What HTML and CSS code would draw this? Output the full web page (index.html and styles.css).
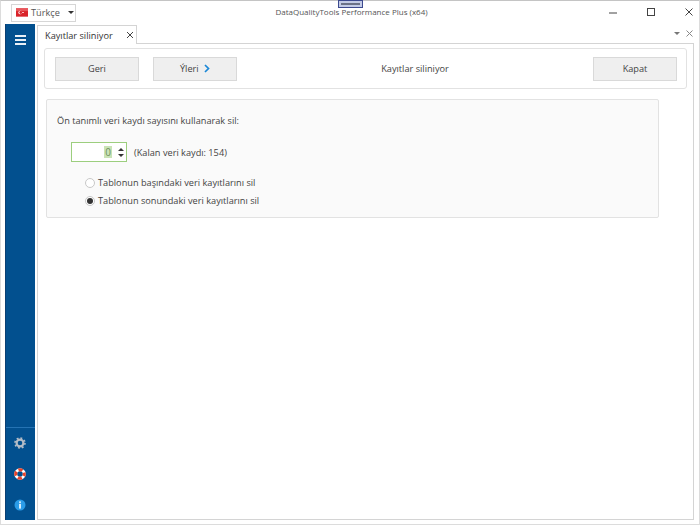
FILE: index.html
```html
<!DOCTYPE html>
<html lang="tr">
  <head>
    <meta charset="UTF-8" />
    <title>DataQualityTools Performance Plus (x64)</title>
    <link rel="stylesheet" href="styles.css">
  </head>
  <body>
    <div class="window">
      <div class="handle"><span></span></div>
      <header class="titlebar">
        <div class="lang">
          <svg class="flag" width="12" height="9" viewBox="0 0 13 9">
            <rect width="13" height="9" fill="#d9232a" />
            <rect width="13" height="3" fill="#e8555a" />
            <circle cx="4.6" cy="4.5" r="2" fill="#fff" />
            <circle cx="5.2" cy="4.5" r="1.6" fill="#d9232a" />
            <rect x="6.8" y="4" width="1.6" height="1" fill="#fff" />
          </svg>
          <span class="lang-name">Türkçe</span>
          <span class="caret"></span>
        </div>
        <div class="title">DataQualityTools Performance Plus (x64)</div>
        <div class="win-btns">
          <svg width="11" height="11" viewBox="0 0 11 11"><path d="M1 6h8" stroke="#444" fill="none" /></svg>
          <svg width="11" height="11" viewBox="0 0 11 11"><rect x="1.5" y="1.5" width="7" height="7" stroke="#444" fill="none" /></svg>
          <svg width="11" height="11" viewBox="0 0 11 11"><path d="M1.5 1.5l7 7M8.5 1.5l-7 7" stroke="#444" fill="none" /></svg>
        </div>
      </header>

      <div class="main">
        <nav class="sidebar">
          <div class="menu-btn"><span></span><span></span><span></span></div>
          <div class="side-tools">
            <svg width="12" height="12" viewBox="0 0 12 12">
              <circle cx="6" cy="6" r="3.4" fill="none" stroke="#b4bcc6" stroke-width="2.2" />
              <circle cx="6" cy="6" r="5" fill="none" stroke="#b4bcc6" stroke-width="1.6" stroke-dasharray="1.9 2" />
            </svg>
            <svg width="12" height="12" viewBox="0 0 12 12">
              <circle cx="6" cy="6" r="4.3" fill="none" stroke="#fff" stroke-width="3" />
              <circle cx="6" cy="6" r="4.3" fill="none" stroke="#e8442a" stroke-width="3" stroke-dasharray="4.2 2.55" stroke-dashoffset="2.1" />
            </svg>
            <svg width="12" height="12" viewBox="0 0 12 12">
              <circle cx="6" cy="6" r="5.5" fill="#2a9be8" />
              <rect x="5.2" y="2.4" width="1.6" height="1.5" fill="#fff" />
              <rect x="5.2" y="4.8" width="1.6" height="4.8" fill="#fff" />
            </svg>
          </div>
        </nav>

        <div class="workspace">
          <div class="tabstrip">
            <div class="tab">
              <span>Kayıtlar siliniyor</span>
              <svg width="8" height="8" viewBox="0 0 8 8"><path d="M1 1l6 6M7 1l-6 6" stroke="#444" fill="none" /></svg>
            </div>
            <div class="strip-btns">
              <span class="caret small"></span>
              <svg width="7" height="7" viewBox="0 0 7 7"><path d="M.5.5l6 6M6.500.5l-6 6" stroke="#888" fill="none" /></svg>
            </div>
          </div>

          <div class="frame">
            <div class="wizard-bar">
              <button class="btn">Geri</button>
              <button class="btn btn-next">
                Ýleri
                <svg width="6" height="9" viewBox="0 0 6 9"><path d="M1 1l3.500 3.500L1 8" stroke="#1b87d6" stroke-width="1.7" fill="none" /></svg>
              </button>
              <div class="step-title">Kayıtlar siliniyor</div>
              <button class="btn">Kapat</button>
            </div>

            <section class="panel">
              <p class="panel-head">Ön tanımlı veri kaydı sayısını kullanarak sil:</p>
              <div class="count-row">
                <div class="spinner">
                  <span class="spin-value">0</span>
                  <span class="spin-arrows"><i class="up"></i><i class="down"></i></span>
                </div>
                <span>(Kalan veri kaydı: 154)</span>
              </div>
              <div class="radios">
                <div class="radio-row"><span class="radio"></span>Tablonun başındaki veri kayıtlarını sil</div>
                <div class="radio-row"><span class="radio checked"></span>Tablonun sonundaki veri kayıtlarını sil</div>
              </div>
            </section>
          </div>
        </div>
      </div>
    </div>
  </body>
</html>
```

FILE: styles.css
```css
html,
body {
  margin: 0;
  height: 100%;
  background-color: #fff;
}
body {
  font-family: "Open Sans", sans-serif;
  font-size: 9.2px;
  color: #444;
  overflow: hidden;
}
.window {
  position: relative;
  width: 700px;
  height: 525px;
  box-sizing: border-box;
  border-top: 1px solid #c4c4c4;
  border-left: 1px solid #dcdcdc;
  border-right: 1px solid #dcdcdc;
  border-bottom: 1px solid #dcdcdc;
  display: flex;
  flex-direction: column;
}
.handle {
  position: absolute;
  top: -1px;
  left: 337px;
  width: 25px;
  height: 8px;
  box-sizing: border-box;
  background-color: #c3cbe6;
  border: 1px solid #3d4a8f;
  display: flex;
  align-items: center;
  justify-content: center;
}
.handle span {
  display: block;
  width: 19px;
  height: 2px;
  background-color: #6a7187;
}

/* title bar */
.titlebar {
  height: 23px;
  display: flex;
  align-items: center;
  position: relative;
  flex: none;
}
.lang {
  margin-left: 10px;
  width: 65px;
  height: 18px;
  box-sizing: border-box;
  border: 1px solid #d6d6d6;
  display: flex;
  align-items: center;
  padding-left: 4px;
}
.flag {
  flex: none;
  margin-right: 3px;
}
.lang-name {
  font-size: 9.2px;
  color: #555;
}
.caret {
  flex: none;
  width: 0;
  height: 0;
  border-left: 3px solid transparent;
  border-right: 3px solid transparent;
  border-top: 3px solid #333;
  margin-left: 8px;
}
.caret.small {
  margin-left: 0;
  border-top-color: #777;
}
.title {
  position: absolute;
  left: 0;
  right: 0;
  top: 5px;
  padding-left: 3px;
  text-align: center;
  font-size: 8px;
  color: #555;
}
.win-btns {
  margin-left: auto;
  margin-right: 4px;
  display: flex;
  gap: 27px;
}

/* sidebar */
.main {
  flex: 1;
  display: flex;
  min-height: 0;
  padding: 0 5px 4px 4px;
}
.sidebar {
  width: 30px;
  flex: none;
  background-color: #02508f;
  display: flex;
  flex-direction: column;
  justify-content: space-between;
  border-left: 1px solid #0a3f73;
  box-sizing: border-box;
}
.menu-btn {
  margin: 11px 0 0 9px;
  display: flex;
  flex-direction: column;
  gap: 2px;
}
.menu-btn span {
  display: block;
  width: 11px;
  height: 2px;
  background-color: #e9f0f7;
}
.side-tools {
  border-top: 1px solid #2573b3;
  padding: 9px 0 9px 8px;
  display: flex;
  flex-direction: column;
  gap: 19px;
}

/* tabs */
.workspace {
  flex: 1;
  margin-left: 2px;
  min-width: 0;
  display: flex;
  flex-direction: column;
}
.tabstrip {
  height: 19px;
  flex: none;
  display: flex;
  align-items: flex-end;
  justify-content: space-between;
}
.tab {
  width: 100px;
  height: 19px;
  box-sizing: border-box;
  border: 1px solid #d4d4d4;
  border-bottom: none;
  background-color: #fff;
  margin-bottom: -1px;
  position: relative;
  display: flex;
  align-items: center;
  justify-content: space-between;
  padding: 0 2px 0 7px;
  color: #333;
}
.strip-btns {
  display: flex;
  align-items: center;
  gap: 6px;
  margin: 0 1px 6px 0;
}
.frame {
  flex: 1;
  border: 1px solid #d4d4d4;
  padding: 4px 6px;
}

/* wizard */
.wizard-bar {
  height: 41px;
  box-sizing: border-box;
  border: 1px solid #e2e2e2;
  border-radius: 3px;
  display: flex;
  align-items: center;
  padding: 0 9px 0 10px;
}
.btn {
  flex: none;
  width: 84px;
  height: 24px;
  box-sizing: border-box;
  border: 1px solid #d9d9d9;
  background-color: #efefef;
  font-family: inherit;
  font-size: 9.2px;
  color: #444;
  padding: 0;
}
.btn-next {
  margin-left: 14px;
}
.btn-next svg {
  margin-left: 3px;
  vertical-align: -1px;
}
.step-title {
  flex: 1;
  text-align: center;
  color: #444;
}

/* panel */
.panel {
  margin: 10px 0 0 2px;
  width: 613px;
  height: 119px;
  box-sizing: border-box;
  background-color: #fafafa;
  border: 1px solid #e2e2e2;
  border-radius: 2px;
  padding: 14px 10px;
}
.panel-head {
  margin: 0;
}
.count-row {
  margin: 15px 0 0 14px;
  display: flex;
  align-items: center;
  gap: 7px;
}
.spinner {
  width: 56px;
  height: 20px;
  box-sizing: border-box;
  border: 1px solid #9cce7e;
  background-color: #fff;
  display: flex;
  align-items: center;
  justify-content: flex-end;
  padding-right: 1px;
}
.spin-value {
  background-color: #c9e3b6;
  color: #6f8f5c;
  font-size: 10px;
  line-height: 12px;
  padding: 0 1px;
}
.spin-arrows {
  margin-left: 5px;
  width: 8px;
  display: flex;
  flex-direction: column;
  align-items: center;
  gap: 3px;
}
.spin-arrows i {
  width: 0;
  height: 0;
  border-left: 3px solid transparent;
  border-right: 3px solid transparent;
}
.spin-arrows .up {
  border-bottom: 3px solid #333;
}
.spin-arrows .down {
  border-top: 3px solid #333;
}
.radios {
  margin: 14px 0 0 28px;
  display: flex;
  flex-direction: column;
  gap: 5px;
}
.radio-row {
  display: flex;
  align-items: center;
  height: 13px;
}
.radio {
  width: 10px;
  height: 10px;
  box-sizing: border-box;
  border: 1px solid #c8c8c8;
  border-radius: 50%;
  background-color: #fff;
  margin-right: 3px;
  display: flex;
  align-items: center;
  justify-content: center;
}
.radio.checked::after {
  content: "";
  width: 6px;
  height: 6px;
  border-radius: 50%;
  background-color: #333;
}
```
